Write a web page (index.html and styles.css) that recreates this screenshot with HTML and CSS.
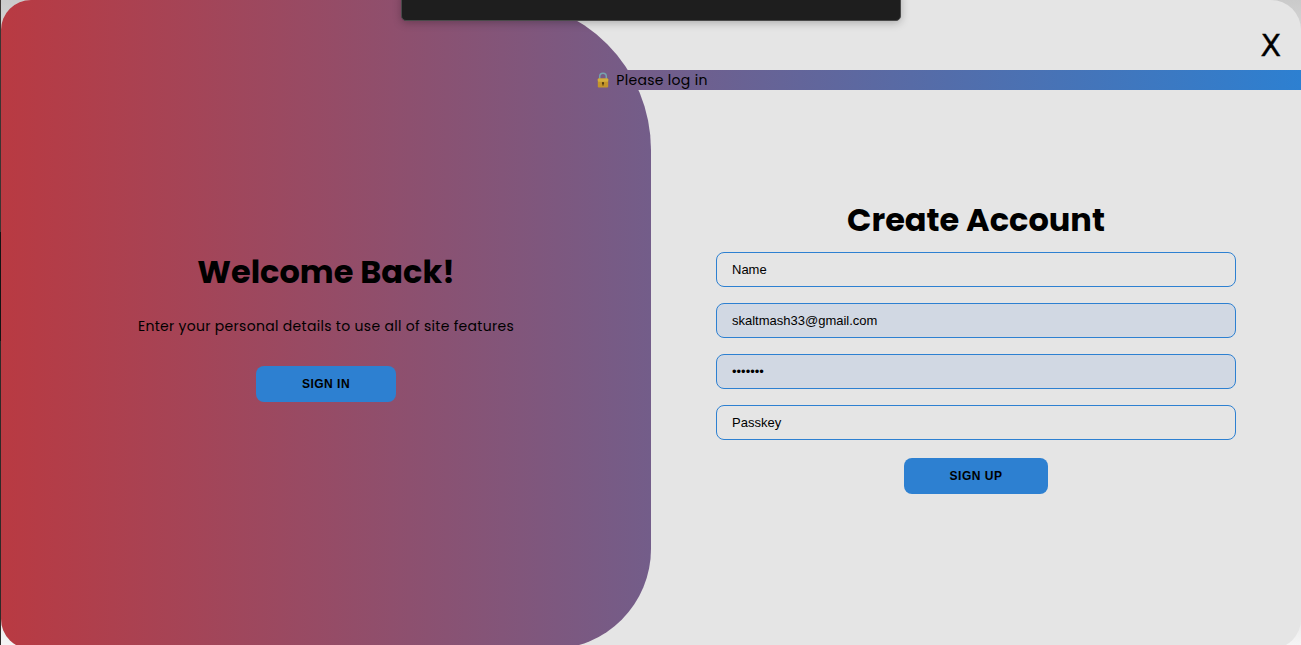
FILE: index.html
```html
<!DOCTYPE html>
<html lang="en">
<head>
<meta charset="utf-8">
<title>Create Account</title>
<link rel="stylesheet" href="styles.css">
</head>
<body>
<div class="edge"></div>
<main class="container">
  <section class="welcome">
    <h1 class="title">Welcome Back!</h1>
    <p class="lead">Enter your personal details to use all of site features</p>
    <button class="btn btn-in" type="button">Sign In</button>
  </section>
  <section class="signup">
    <form class="form">
      <h1 class="title signup-title">Create Account</h1>
      <input class="field" type="text" placeholder="Name">
      <input class="field filled" type="email" value="skaltmash33@gmail.com">
      <input class="field filled" type="password" value="1234567">
      <input class="field" type="text" placeholder="Passkey">
      <button class="btn btn-up" type="button">Sign Up</button>
    </form>
  </section>
  <div class="notice">
    <svg class="lock" viewBox="0 0 12 16" width="12" height="16">
      <path d="M2.7 7.5V4.6a3.3 3.3 0 0 1 6.6 0V7.5" fill="none" stroke="#76a3ae" stroke-width="1.5"/>
      <rect x="0.8" y="6.4" width="10.4" height="9" rx="1" fill="#c4952b"/>
      <rect x="0.8" y="6.4" width="10.4" height="3.4" rx="1" fill="#d3ae3d"/>
      <circle cx="6" cy="11" r="1.1" fill="#49360f"/>
      <path d="M6 11v2.4" stroke="#49360f" stroke-width="1.1"/>
    </svg>
    <span class="notice-text">Please log in</span>
  </div>
  <button class="close" type="button">X</button>
</main>
<div class="topbar"></div>
</body>
</html>
```
FILE: styles.css
```css
* { box-sizing: border-box; }
body {
  margin: 0;
  height: 645px;
  overflow: hidden;
  display: flex;
  background: linear-gradient(#cacaca, #d8d8d8 40px, #dcdcdc 590px, #f5f5f5 645px);
  font-family: Poppins, Inter, "Open Sans", sans-serif;
  color: #000;
}
.edge {
  width: 1px;
  height: 645px;
  background: linear-gradient(#3b3432 0 232px, #141414 232px 341px, #2e2a28 341px);
}
.container {
  position: relative;
  width: 1300px;
  height: 649px;
  flex: none;
  display: flex;
  overflow: hidden;
  border-radius: 30px;
  background: #e5e5e5;
}
.welcome {
  width: 650px;
  display: flex;
  flex-direction: column;
  align-items: center;
  padding-top: 248px;
  border-radius: 0 150px 100px 0;
  background: linear-gradient(to right, #b93a42, #2d80d1) 0 0 / 1300px 100%;
}
.title {
  margin: 0;
  font-size: 32px;
  line-height: 48px;
  font-weight: 700;
  white-space: nowrap;
}
.signup-title { margin-bottom: 8px; }
.lead {
  margin: 20px 0 30px;
  font-size: 14px;
  line-height: 20px;
  letter-spacing: 0.3px;
  white-space: nowrap;
}
.btn {
  height: 36px;
  padding: 0;
  border: 0;
  border-radius: 8px;
  background: #2d80d1;
  color: #000;
  font: 600 12px/36px "Liberation Sans", Arial, sans-serif;
  letter-spacing: 0.5px;
  text-transform: uppercase;
}
.btn-in { width: 140px; }
.btn-up { width: 144px; margin-top: 2px; }
.signup { width: 650px; padding: 196px 65px 0; }
.form {
  display: flex;
  flex-direction: column;
  align-items: center;
}
.field {
  width: 520px;
  height: 35px;
  margin: 0 0 16px;
  padding: 0 15px;
  border: 1px solid #2d80d1;
  border-radius: 8px;
  background: transparent;
  color: #000;
  font: 13px "Liberation Sans", Arial, sans-serif;
}
.field::placeholder { color: #000; opacity: 1; }
.filled { background: #d1d8e3; }
.notice {
  position: absolute;
  top: 70px;
  left: 0;
  width: 1300px;
  height: 20px;
  display: flex;
  align-items: center;
  justify-content: center;
  gap: 7px;
  padding-left: 3px;
  background: linear-gradient(to right, #b93a42, #2d80d1);
}
.lock { display: block; }
.notice-text {
  font-size: 14px;
  line-height: 20px;
  letter-spacing: 0.3px;
}
.close {
  position: absolute;
  top: 26px;
  right: 20px;
  padding: 0;
  border: 0;
  background: none;
  color: #000;
  font: 30px/40px "DejaVu Sans", sans-serif;
  -webkit-text-stroke: 0.4px #000;
}
.topbar {
  position: absolute;
  top: -10px;
  left: 401px;
  width: 500px;
  height: 31px;
  border: 1px solid #494949;
  border-radius: 5px;
  background: #1e1e1e;
  box-shadow: 0 2px 8px rgba(0, 0, 0, 0.25);
}
```
